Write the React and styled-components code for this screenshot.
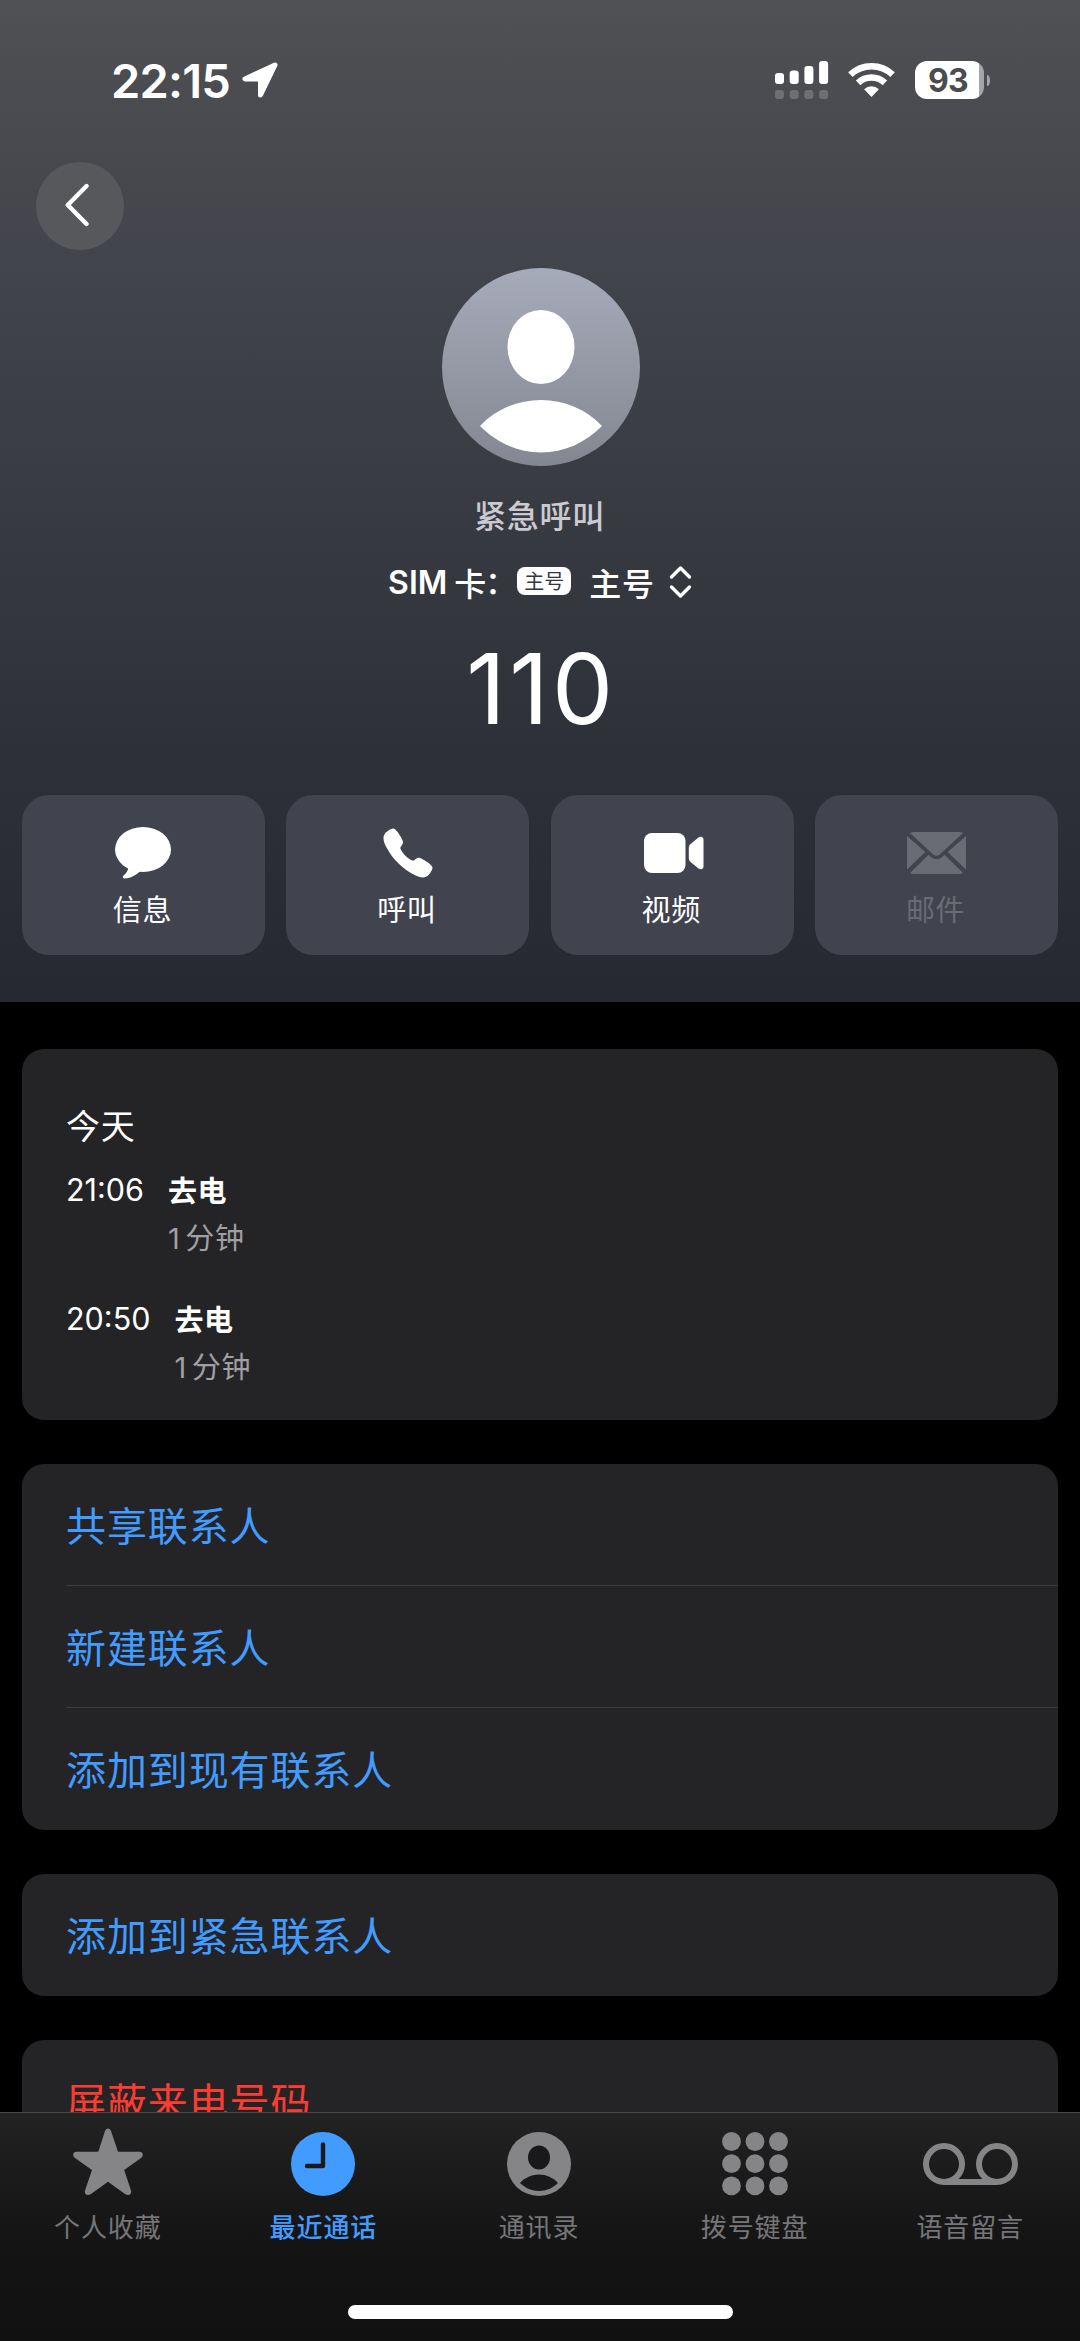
import React from 'react';
import styled, { createGlobalStyle } from 'styled-components';
import { IoCall } from 'react-icons/io5';

const GlobalStyle = createGlobalStyle`
  * {
    box-sizing: border-box;
  }
  body {
    margin: 0;
    background: #000000;
    color: #ffffff;
    font-family: Inter, 'Noto Sans CJK SC', sans-serif;
  }
  svg {
    display: block;
    flex-shrink: 0;
  }
`;
const Page = styled.div`
  display: flex;
  flex-direction: column;
  width: 1080px;
  height: 2341px;
  overflow: hidden;
`;
const Header = styled.header`
  display: flex;
  flex-direction: column;
  align-items: center;
  flex-shrink: 0;
  height: 1002px;
  background: linear-gradient(
    to bottom,
    #505154 0%,
    #4a4b50 11%,
    #42444b 27%,
    #363840 57%,
    #2d2f38 79%,
    #272932 100%
  );
`;
const StatusBar = styled.div`
  display: flex;
  align-items: center;
  width: 100%;
  height: 162px;
  padding: 0 90px 2px 111px;
`;
const Clock = styled.span`
  margin-right: 12px;
  font-size: 47px;
  font-weight: 600;
  letter-spacing: -0.8px;
`;
const Indicators = styled.div`
  display: flex;
  align-items: center;
  margin-left: auto;
`;
const Wifi = styled.span`
  margin: 0 20px 0 19px;
`;
const Battery = styled.div`
  display: flex;
  align-items: center;
  justify-content: center;
  width: 69px;
  height: 38px;
  margin-right: 3px;
  padding-right: 3px;
  border-radius: 12px;
  background: linear-gradient(to right, #ffffff 64px, #a5a5a8 64px);
  color: #4b4c50;
  font-size: 32px;
  font-weight: 700;
  letter-spacing: -0.8px;
`;
const BatteryCap = styled.span`
  width: 3px;
  height: 11px;
  border-radius: 0 3px 3px 0 / 0 6px 6px 0;
  background: #a5a5a8;
`;
const BackButton = styled.button`
  display: flex;
  align-items: center;
  justify-content: center;
  align-self: flex-start;
  width: 88px;
  height: 88px;
  margin-left: 36px;
  padding: 0 6px 2px 0;
  border: none;
  border-radius: 50%;
  background: #57585c;
`;
const Avatar = styled.div`
  width: 198px;
  height: 198px;
  margin: 18px 0 31px 1px;
  border-radius: 50%;
  background: linear-gradient(to bottom, #a6abba, #848791);
`;
const Title = styled.h2`
  margin: 0 1px 0 0;
  color: #cbcad0;
  font-size: 32px;
  font-weight: 500;
  line-height: 40px;
  letter-spacing: 0.8px;
`;
const SimRow = styled.div`
  display: flex;
  align-items: center;
  height: 40px;
  margin-top: 25px;
  font-size: 32px;
  font-weight: 500;
  letter-spacing: 0.8px;
`;
const SimName = styled.span`
  margin-right: 7px;
  font-weight: 600;
  letter-spacing: 0;
`;
const SimCard = styled.span`
  width: 63px;
  white-space: nowrap;
`;
const Colon = styled.span`
  margin-left: -2px;
  vertical-align: 2px;
  line-height: 1;
`;
const SimBadge = styled.span`
  width: 54px;
  height: 28px;
  margin: 0 18px 3px 0;
  border-radius: 8px;
  background: #ffffff;
  color: #34363e;
  font-size: 20px;
  font-weight: 400;
  line-height: 31px;
  letter-spacing: 0;
  text-align: center;
`;
const SimPicker = styled.span`
  margin-right: 14px;
`;
const PhoneNumber = styled.h1`
  margin: 37px 0 56px;
  padding-left: 3px;
  font-size: 97px;
  font-weight: 400;
  line-height: 100px;
  letter-spacing: 3.5px;
`;
const Actions = styled.div`
  display: grid;
  grid-template-columns: repeat(4, 1fr);
  gap: 21.5px;
  width: 1036px;
`;
const Action = styled.button`
  display: flex;
  flex-direction: column;
  align-items: center;
  height: 160px;
  padding: 28px 0 0;
  border: none;
  border-radius: 27px;
  background: #41434f;
  color: ${props => (props.disabled ? '#696b75' : '#ffffff')};
`;
const ActionIcon = styled.span`
  display: flex;
  align-items: center;
  justify-content: center;
  height: 60px;
`;
const ActionLabel = styled.span`
  margin: 12px 2px 0 0;
  font-family: Inter, 'Noto Sans CJK SC', sans-serif;
  font-size: 29px;
  line-height: 32px;
  letter-spacing: 0.6px;
`;
const Content = styled.main`
  flex: 1;
  min-height: 0;
  padding: 47px 22px 0;
  overflow: hidden;
`;
const Card = styled.section`
  margin-bottom: 44px;
  border-radius: 22px;
  background: #242426;
`;
const HistoryCard = styled(Card)`
  height: 371px;
  padding: 57px 44px 0;
`;
const Day = styled.h3`
  margin: 0 0 20px;
  font-size: 34px;
  font-weight: 400;
  line-height: 42px;
  letter-spacing: 0.8px;
`;
const Call = styled.div`
  display: flex;
  height: 129px;
  font-size: 29px;
  line-height: 44px;
`;
const CallTime = styled.span`
  margin-right: 24px;
  font-size: 30.5px;
`;
const CallInfo = styled.div`
  display: flex;
  flex-direction: column;
  padding-top: 2px;
  letter-spacing: 0.6px;
`;
const CallKind = styled.span`
  font-weight: 700;
`;
const CallLength = styled.span`
  margin-top: 3px;
  color: #a09fa5;
`;
const Minutes = styled.span`
  margin-right: 5px;
`;
const Row = styled.div`
  height: 122px;
  margin-left: 44px;
  border-bottom: 1px solid #3d3d41;
  color: ${props => (props.$danger ? '#fb3c33' : '#429bff')};
  font-size: 40px;
  line-height: 125px;
  letter-spacing: 0.9px;

  &:last-child {
    border-bottom: none;
  }
`;
const TabBar = styled.nav`
  display: flex;
  flex-direction: column;
  align-items: center;
  flex-shrink: 0;
  height: 229px;
  border-top: 1px solid #48484a;
  background: linear-gradient(to bottom, #222223 0%, #19191a 35%, #131314 62%, #111112 100%);
`;
const Tabs = styled.div`
  display: grid;
  grid-template-columns: repeat(5, 1fr);
  width: 100%;
  padding-right: 2px;
`;
const Tab = styled.a`
  display: flex;
  flex-direction: column;
  align-items: center;
  color: ${props => (props.$active ? '#429bff' : '#858587')};
`;
const TabIcon = styled.span`
  display: flex;
  align-items: center;
  height: 102px;
`;
const TabLabel = styled.span`
  margin-top: -1px;
  color: ${props => (props.$active ? '#429bff' : '#767678')};
  font-size: 26px;
  font-weight: ${props => (props.$active ? 500 : 400)};
  line-height: 28px;
  letter-spacing: 0.9px;
`;
const HomeIndicator = styled.div`
  width: 385px;
  height: 14px;
  margin-top: 63px;
  border-radius: 7px;
  background: #ffffff;
`;

const LocationIcon = () => (
  <svg width="36" height="36" viewBox="0 0 36 36">
    <path
      d="M33 3 L3 17 H18.5 V33 Z"
      fill="#fff"
      stroke="#fff"
      strokeWidth="5"
      strokeLinejoin="round"
    />
  </svg>
);

const SignalIcon = () => (
  <svg width="54" height="38" viewBox="0 0 54 38">
    {[12, 9.5, 5, 0].map((y, i) => (
      <g key={y} fill="#fff">
        <rect x={i * 14.7} y={y} width="9" height={23 - y} rx="3" />
        <rect x={i * 14.7} y="29" width="9" height="9" rx="3" opacity="0.2" />
      </g>
    ))}
  </svg>
);

const WifiIcon = () => (
  <svg width="47" height="36" viewBox="0 0 47 36">
    <g fill="none" stroke="#fff" strokeWidth="6.5">
      <path d="M2.4 12.7 A30.7 30.7 0 0 1 44.6 12.7" />
      <path d="M10.1 20.9 A19.5 19.5 0 0 1 36.9 20.9" />
    </g>
    <path d="M23.5 35 L16.1 27.2 A10.7 10.7 0 0 1 30.9 27.2 Z" fill="#fff" />
  </svg>
);

const BackIcon = () => (
  <svg width="26" height="44" viewBox="0 0 26 44">
    <path
      d="M22.5 3 L3.8 22 L22.5 41"
      fill="none"
      stroke="#fff"
      strokeWidth="4.4"
      strokeLinecap="round"
      strokeLinejoin="round"
    />
  </svg>
);

const PersonIcon = () => (
  <svg width="198" height="198" viewBox="0 0 198 198" fill="#fff">
    <ellipse cx="99" cy="79" rx="33.5" ry="37" />
    <path d="M38 158 C54 141 76 132 99 132 S144 141 160 158 C143 175 122 184.5 99 184.5 S55 175 38 158 Z" />
  </svg>
);

const UpDownIcon = () => (
  <svg width="23" height="34" viewBox="0 0 23 34">
    <path
      d="M2.5 12 L11.5 3 L20.5 12 M2.5 22 L11.5 31 L20.5 22"
      fill="none"
      stroke="#fff"
      strokeWidth="3.4"
      strokeLinecap="round"
      strokeLinejoin="round"
    />
  </svg>
);

const MessageIcon = () => (
  <svg width="56" height="52" viewBox="0 0 56 52" fill="currentColor">
    <ellipse cx="28" cy="22.5" rx="28" ry="22.5" />
    <path d="M13.5 40 C13 44 11 46.5 8.5 48.5 C7 50 8 51.5 10 51.5 C15 51.3 21 48.5 25.5 44 Z" />
  </svg>
);

const VideoIcon = () => (
  <svg width="63" height="40" viewBox="-3 0 63 40" fill="currentColor">
    <rect width="41.5" height="40" rx="8" />
    <path d="M44.8 14.5 Q44.8 12.5 46.3 11.2 L54.5 4.5 Q56 3.5 57.5 3.8 Q59.5 4.3 59.5 6.5 V33.5 Q59.5 35.7 57.5 36.2 Q56 36.5 54.5 35.5 L46.3 28.8 Q44.8 27.5 44.8 25.5 Z" />
  </svg>
);

const MailIcon = () => (
  <svg width="59" height="42" viewBox="0 0 59 42" fill="currentColor">
    <path d="M3 1 Q4.5 0 6 0 H53 Q54.5 0 56 1 L33 22.3 Q29.5 25.3 26 22.3 Z" />
    <path d="M0 4 L18.3 20 L0 37.5 Z M59 4 L40.7 20 L59 37.5 Z" />
    <path d="M3 41 L21.5 22.7 L24 25 Q29.5 29.5 35 25 L37.5 22.7 L56 41 Q54.5 42 53 42 H6 Q4.5 42 3 41 Z" />
  </svg>
);

const StarIcon = () => (
  <svg width="70" height="72" viewBox="0 0 70 72" fill="currentColor">
    <path d="M45 23.7 H66.5 C70 23.7 71 27.5 68 30 L51.2 42 L58 62.5 C59 66.5 55.5 68.5 52 66 L35 53.7 L18 66 C14.5 68.5 11 66.5 12 62.5 L19 42 L2 30 C-1 27.5 0 23.7 3.5 23.7 H25.3 L32 3 C33 -0.5 37 -0.5 38 3 Z" />
  </svg>
);

const RecentsIcon = () => (
  <svg width="64" height="64" viewBox="0 0 64 64">
    <circle cx="32" cy="32" r="32" fill="currentColor" />
    <path
      d="M32 12.5 V34 H16"
      fill="none"
      stroke="#1a1a1c"
      strokeWidth="4.4"
      strokeLinecap="round"
      strokeLinejoin="round"
    />
  </svg>
);

const ContactsIcon = () => (
  <svg width="64" height="64" viewBox="0 0 64 64">
    <circle cx="32" cy="32" r="32" fill="currentColor" />
    <g fill="#19191b">
      <ellipse cx="32" cy="25.5" rx="11" ry="12" />
      <path d="M13 51 C18 45.5 25 42.5 32 42.5 S46 45.5 51 51 C46 56 39 59 32 59 S18 56 13 51 Z" />
    </g>
  </svg>
);

const KeypadIcon = () => (
  <svg width="66" height="64" viewBox="0 0 66 64" fill="currentColor">
    {[9.5, 31.7, 53.9].map(cy => (
      [9.5, 33, 56.5].map(cx => <circle key={cx} cx={cx} cy={cy} r="9.4" />)
    ))}
  </svg>
);

const VoicemailIcon = () => (
  <svg width="95" height="42" viewBox="0 0 95 42" fill="none" stroke="currentColor" strokeWidth="6">
    <circle cx="21" cy="21" r="18" />
    <circle cx="74" cy="21" r="18" />
    <path d="M21 39 H74" />
  </svg>
);

const actions = [
  { label: '信息', icon: <MessageIcon /> },
  { label: '呼叫', icon: <IoCall size={56} /> },
  { label: '视频', icon: <VideoIcon /> },
  { label: '邮件', icon: <MailIcon />, disabled: true },
];

const calls = [
  { time: '21:06', kind: '去电', minutes: 1 },
  { time: '20:50', kind: '去电', minutes: 1 },
];

const tabs = [
  { label: '个人收藏', icon: <StarIcon /> },
  { label: '最近通话', icon: <RecentsIcon />, active: true },
  { label: '通讯录', icon: <ContactsIcon /> },
  { label: '拨号键盘', icon: <KeypadIcon /> },
  { label: '语音留言', icon: <VoicemailIcon /> },
];

export default class App extends React.Component {
  render() {
    return (
      <Page>
        <GlobalStyle />
        <Header>
          <StatusBar>
            <Clock>22:15</Clock>
            <LocationIcon />
            <Indicators>
              <SignalIcon />
              <Wifi>
                <WifiIcon />
              </Wifi>
              <Battery>93</Battery>
              <BatteryCap />
            </Indicators>
          </StatusBar>
          <BackButton>
            <BackIcon />
          </BackButton>
          <Avatar>
            <PersonIcon />
          </Avatar>
          <Title>紧急呼叫</Title>
          <SimRow>
            <SimName>SIM</SimName>
            <SimCard>
              卡<Colon>：</Colon>
            </SimCard>
            <SimBadge>主号</SimBadge>
            <SimPicker>主号</SimPicker>
            <UpDownIcon />
          </SimRow>
          <PhoneNumber>110</PhoneNumber>
          <Actions>
            {actions.map(({ label, icon, disabled }) => (
              <Action key={label} disabled={disabled}>
                <ActionIcon>{icon}</ActionIcon>
                <ActionLabel>{label}</ActionLabel>
              </Action>
            ))}
          </Actions>
        </Header>
        <Content>
          <HistoryCard>
            <Day>今天</Day>
            {calls.map(({ time, kind, minutes }) => (
              <Call key={time}>
                <CallTime>{time}</CallTime>
                <CallInfo>
                  <CallKind>{kind}</CallKind>
                  <CallLength>
                    <Minutes>{minutes}</Minutes>分钟
                  </CallLength>
                </CallInfo>
              </Call>
            ))}
          </HistoryCard>
          <Card>
            <Row>共享联系人</Row>
            <Row>新建联系人</Row>
            <Row>添加到现有联系人</Row>
          </Card>
          <Card>
            <Row>添加到紧急联系人</Row>
          </Card>
          <Card>
            <Row $danger>屏蔽来电号码</Row>
          </Card>
        </Content>
        <TabBar>
          <Tabs>
            {tabs.map(({ label, icon, active }) => (
              <Tab key={label} $active={active}>
                <TabIcon>{icon}</TabIcon>
                <TabLabel $active={active}>{label}</TabLabel>
              </Tab>
            ))}
          </Tabs>
          <HomeIndicator />
        </TabBar>
      </Page>
    );
  }
}
